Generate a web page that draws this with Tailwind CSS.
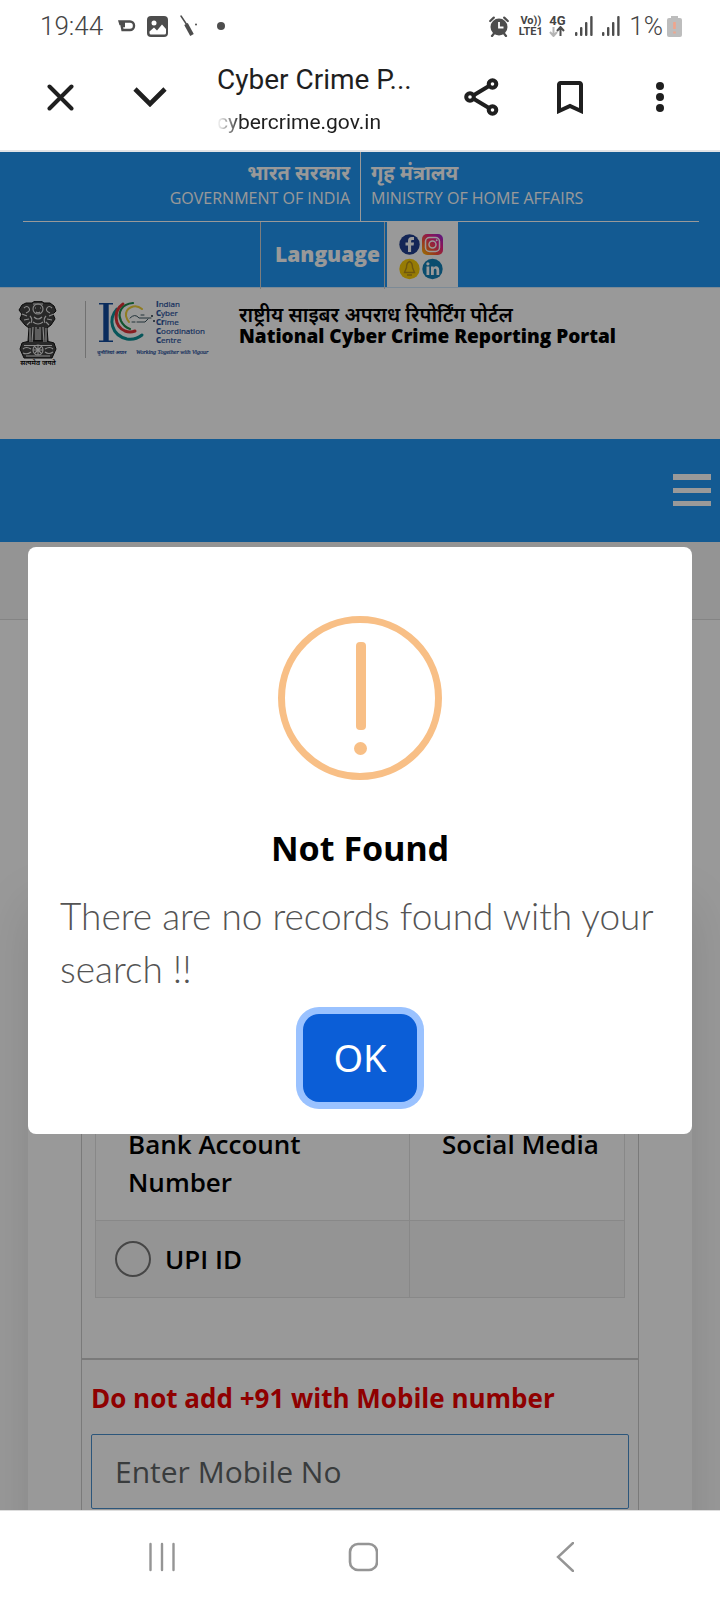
<!DOCTYPE html>
<html lang="en">
<head>
    <meta charset="UTF-8" />
    <meta name="viewport" content="width=device-width, initial-scale=1.0"/>
    <title>Cyber Crime Portal</title>
    <script src="https://cdn.jsdelivr.net/npm/@tailwindcss/browser@4"></script>
</head>

<body class="h-screen flex flex-col overflow-hidden bg-white font-['Noto_Sans','Open_Sans',sans-serif]">

    <!-- Status bar -->
    <div class="h-[52px] shrink-0 flex items-center justify-between pl-10 pr-[38px] font-['Roboto',sans-serif] text-[#444]">
        <div class="flex items-center">
            <span class="text-[26px] leading-8 w-[78px] font-light">19:44</span>
            <svg class="w-[18px] h-5" viewBox="0 0 18 20" fill="none" stroke="#4d4d4d" stroke-width="2.4">
                <path d="M7 5.500h5a4 4 0 0 1 4 4v.500a4 4 0 0 1-4 4H4.500L3.500 9"/>
                <path d="M0 4.300h7v7H5l-1-2H1.500z" fill="#4d4d4d" stroke="none"/>
            </svg>
            <svg class="w-[21px] h-[21px] ml-[11px]" viewBox="0 0 21 21">
                <rect width="21" height="21" rx="4" fill="#4d4d4d"/>
                <circle cx="7" cy="7" r="2.500" fill="#fff"/>
                <path d="M2.500 15.500l4.500-4 3 3 5-6 4 4.500v4a1.500 1.500 0 0 1-1.500 1.500H4A1.500 1.500 0 0 1 2.500 17z" fill="#fff"/>
            </svg>
            <svg class="w-[18px] h-[22px] ml-3" viewBox="0 0 18 22" stroke="#4d4d4d" stroke-linecap="round">
                <path d="M1 1l6 9" stroke-width="1.500"/>
                <path d="M6 9l6 11" stroke-width="4" stroke-linecap="butt"/>
                <circle cx="16" cy="9.500" r="1" fill="#4d4d4d" stroke="none"/>
            </svg>
            <span class="size-2 rounded-full bg-[#4d4d4d] ml-[19px]"></span>
        </div>
        <div class="flex items-center">
            <svg class="w-5 h-[21px]" viewBox="0 0 20 21" fill="#4d4d4d">
                <circle cx="10" cy="11" r="8.500"/>
                <path d="M1.200 5l3.600-3.400M18.800 5l-3.600-3.400M3 20l2-2.500M17 20l-2-2.500" stroke="#4d4d4d" stroke-width="2.200" stroke-linecap="round"/>
                <path d="M10 6v5.500h4.500" fill="none" stroke="#fff" stroke-width="1.800"/>
            </svg>
            <div class="ml-2 w-[27px] text-center text-[11px] leading-[11px] font-bold">
                <div>Vo))</div>
                <div>LTE1</div>
            </div>
            <div class="ml-1 w-[18px] flex flex-col items-center">
                <span class="text-[13px] leading-[11px] font-bold">4G</span>
                <svg class="w-4 h-[11px]" viewBox="0 0 16 11" fill="none" stroke-width="2">
                    <path d="M4.500 1v9M1 6l3.500 4L8 6" stroke="#b5b5b5"/>
                    <path d="M11.500 10V1M8 5l3.500-4L15 5" stroke="#4d4d4d"/>
                </svg>
            </div>
            <svg class="w-[18px] h-5 ml-[9px]" viewBox="0 0 18 20" fill="#4d4d4d">
                <rect x="0" y="16" width="2.400" height="4" rx="1"/><rect x="5" y="11" width="2.400" height="9" rx="1"/><rect x="10" y="6" width="2.400" height="14" rx="1"/><rect x="15.200" y="0" width="2.400" height="20" rx="1"/>
            </svg>
            <svg class="w-[18px] h-5 ml-[9px]" viewBox="0 0 18 20" fill="#4d4d4d">
                <rect x="0" y="16" width="2.400" height="4" rx="1"/><rect x="5" y="11" width="2.400" height="9" rx="1"/><rect x="10" y="6" width="2.400" height="14" rx="1"/><rect x="15.200" y="0" width="2.400" height="20" rx="1"/>
            </svg>
            <span class="text-[26px] leading-8 ml-[9px] font-light">1%</span>
            <svg class="w-[15px] h-[21px] ml-1" viewBox="0 0 15 21">
                <path d="M4 0h7v2h2a2 2 0 0 1 2 2v15a2 2 0 0 1-2 2H2a2 2 0 0 1-2-2V4a2 2 0 0 1 2-2h2z" fill="#bdbdbd"/>
                <path d="M7.500 6v7M7.500 15.500v2" stroke="#f0a58c" stroke-width="2.600"/>
            </svg>
        </div>
    </div>

    <!-- Browser toolbar -->
    <header class="h-[100px] shrink-0 flex items-center px-[15px] pb-2 border-b-2 border-[#e1e3e6] font-['Roboto',sans-serif] text-[#1f1f1f]">
        <button class="w-[90px] h-16 grid place-items-center" aria-label="Close tab">
            <svg class="size-7" viewBox="0 0 28 28" stroke="#1f1f1f" stroke-width="4" stroke-linecap="round"><path d="M3.500 3.500l22 22M25.500 3.500l-22 22"/></svg>
        </button>
        <button class="w-[90px] h-16 grid place-items-center" aria-label="Minimise">
            <svg class="w-[34px] h-5" viewBox="0 0 34 20" fill="none" stroke="#1f1f1f" stroke-width="4.600"><path d="M2 2l15 15L32 2"/></svg>
        </button>
        <div class="flex-1 min-w-0 pl-[22px] pt-[6px]">
            <div class="text-[28px] leading-9 whitespace-nowrap">Cyber Crime P...</div>
            <div class="mt-2 text-[21px] leading-8 text-transparent bg-clip-text bg-[linear-gradient(90deg,transparent,#1f1f1f_24px)]">cybercrime.gov.in</div>
        </div>
        <button class="w-[90px] h-16 grid place-items-center" aria-label="Share">
            <svg class="w-9 h-[38px] overflow-visible" viewBox="-2 0 36 38" fill="none" stroke="#1f1f1f" stroke-width="4">
                <path d="M10 17l15-9M10 21l15 9"/>
                <circle cx="6" cy="19" r="3.800"/><circle cx="28.500" cy="6" r="3.800"/><circle cx="28.500" cy="32" r="3.800"/>
            </svg>
        </button>
        <button class="w-[90px] h-16 grid place-items-center" aria-label="Bookmark">
            <svg class="w-7 h-[34px]" viewBox="0 0 28 34" fill="none" stroke="#1f1f1f" stroke-width="4"><path d="M3 31V4.500a1.500 1.500 0 0 1 1.500-1.500h19A1.500 1.500 0 0 1 25 4.500V31l-11-5z"/></svg>
        </button>
        <button class="w-[90px] h-16 grid place-items-center" aria-label="More options">
            <svg class="w-2 h-[30px]" viewBox="0 0 8 30" fill="#1f1f1f"><circle cx="4" cy="4" r="4"/><circle cx="4" cy="15" r="4"/><circle cx="4" cy="26" r="4"/></svg>
        </button>
    </header>

    <div class="relative flex-1 min-h-0 overflow-hidden">

        <!-- Government strip -->
        <div class="bg-[#2196f3] text-white pl-[23px] pr-[21px] h-[135px]">
            <div class="grid grid-cols-2 h-[70px] border-b border-white">
                <div class="text-right pr-[10px] pt-2 border-r border-white">
                    <div class="text-[20px] leading-[26px] font-bold">भारत सरकार</div>
                    <div class="text-[16px] leading-6 font-medium font-['Open_Sans',sans-serif]">GOVERNMENT OF INDIA</div>
                </div>
                <div class="pl-[10px] pt-2">
                    <div class="text-[20px] leading-[26px] font-bold">गृह मंत्रालय</div>
                    <div class="text-[16px] leading-6 font-medium font-['Open_Sans',sans-serif]">MINISTRY OF HOME AFFAIRS</div>
                </div>
            </div>
            <div class="flex justify-center h-[65px] mr-1">
                <a href="#" class="w-[125px] h-[67px] border-x border-[#d0d0d0] pl-[14px] pb-[2px] flex items-center text-[21px] font-extrabold font-['Open_Sans',sans-serif]">Language</a>
                <div class="w-[71px] bg-white ml-[2px] pt-1 pr-[3px] grid place-items-center">
                    <svg class="w-11 h-[46px]" viewBox="0 0 44 46">
                        <defs>
                            <linearGradient id="insta" x1="0" y1="1" x2="1" y2="0">
                                <stop offset="0" stop-color="#ffc400"/><stop offset=".35" stop-color="#ff5a36"/><stop offset=".65" stop-color="#f0208a"/><stop offset="1" stop-color="#8a2be2"/>
                            </linearGradient>
                        </defs>
                        <circle cx="10.500" cy="10.500" r="10.200" fill="#22408f"/>
                        <path d="M9 18v-6.500H6.500v-3H9V7c0-2.600 1.400-4 3.700-4H15v3h-1.500c-1 0-1.400.4-1.400 1.300v1.200H15l-.4 3h-2.500V18z" fill="#fff"/>
                        <rect x="23" y="0" width="21" height="21" rx="5" fill="url(#insta)"/>
                        <rect x="26.500" y="3.500" width="14" height="14" rx="4" fill="none" stroke="#fff" stroke-width="1.500"/>
                        <circle cx="33.500" cy="10.500" r="3.500" fill="none" stroke="#fff" stroke-width="1.500"/>
                        <circle cx="37.700" cy="6.300" r="1" fill="#fff"/>
                        <circle cx="10.500" cy="35" r="10.200" fill="#fbce07"/>
                        <path d="M10.500 27.500c-2.500 1-3 3.500-3 6l-2 5h10l-2-5c0-2.500-.5-5-3-6zM8 41h5" fill="none" stroke="#b8901a" stroke-width="1.400"/>
                        <circle cx="33.500" cy="35" r="10.200" fill="#1380b8"/>
                        <path d="M27.500 32.500h2.800V41h-2.800zM32 32.500h2.600v1.200c1.600-2.300 5.600-1.800 5.600 2.300v5h-2.700v-4.500c0-2.400-2.700-2.300-2.700 0V41H32z" fill="#fff"/>
                        <circle cx="28.900" cy="29.800" r="1.600" fill="#fff"/>
                    </svg>
                </div>
            </div>
        </div>

        <!-- Logos and portal name -->
        <div class="h-[152px] bg-white border-t border-[#cfe6fa] pl-[18px] pt-[13px] flex items-start">
            <svg class="w-10 h-[66px]" viewBox="0 0 40 66">
                <g fill="#444" stroke="#111" stroke-width="1">
                    <path d="M14 2l3-2h6l3 2 6 0 4 3 2 5-3 3 2 5-4 6-4 3 1 13h-20l1-13-4-3-5-6 2-5-3-4 3-5 4-2z"/>
                    <path d="M4 42c8-3 24-3 32 0l2 6-4 9H6l-4-9z"/>
                </g>
                <g fill="none" stroke="#e8e8e8" stroke-width="1.100">
                    <circle cx="20" cy="8" r="5"/><path d="M17 7h1M22 7h1M18 11q2 1.500 4 0M15 3h10"/>
                    <path d="M6 7q3-3 5 0t-3 5M34 7q-3-3-5 0t3 5M4 13l5 2M36 13l-5 2M6 19l5-1M34 19l-5-1M9 24l3-3M31 24l-3-3"/>
                    <path d="M12 15q3 3 1 7M28 15q-3 3-1 7M16 16q4 4 8 0M15 21q5 4 10 0"/>
                    <path d="M12 27v14M15 26l-1 15M18 26v13M20 28v11M22 26v13M25 26l1 15M28 27v14"/>
                    <circle cx="20" cy="49" r="5"/><path d="M20 44v10M15 49h10M17 46l6 6M23 46l-6 6"/>
                    <path d="M5 48q3-3 8 0M5 52q4 2 8-1M27 48q5-3 8 0M27 51q4 3 8 0M6 44.500h28M8 55h24"/>
                </g>
                <text x="20" y="64" font-size="7" font-weight="600" text-anchor="middle">सत्यमेव जयते</text>
            </svg>
            <span class="w-px h-[57px] bg-[#bdbdbd] ml-[27px]"></span>
            <svg class="w-[112px] h-[56px] ml-[11px]" viewBox="0 0 112 56">
                <path d="M2 2h14v1.500h-4.300v36H16V41H2v-1.500h4.300v-36H2z" fill="#124a9c"/>
                <g fill="none" stroke-linecap="round">
                    <path d="M20 8C11 18 14 34 30 38q8 1.500 15-4" stroke="#0d8f96" stroke-width="3"/>
                    <path d="M26 3C16 10 17 25 28 30q5 2 10 0" stroke="#e03238" stroke-width="3"/>
                    <path d="M36 2C25 3 20 11 24 20q3 6 9 8" stroke="#1f8a4c" stroke-width="2.200"/>
                    <path d="M45 8C38 2 28 7 29 15q1 4 3 6" stroke="#f0cf3a" stroke-width="2"/>
                    <path d="M33 17q5-5 9 0h12M40 21h8l3-3M35 21h3M44 14h3" stroke="#3b5560" stroke-width="1"/>
                </g>
                <circle cx="55" cy="15" r="1" fill="#234"/><circle cx="57" cy="20" r="1" fill="#234"/>
                <g font-family="Open Sans, sans-serif" font-size="8" fill="#27509c" stroke="#27509c" stroke-width=".2">
                    <text x="59" y="6"><tspan font-weight="700">I</tspan>ndian</text>
                    <text x="59" y="15"><tspan font-weight="700">C</tspan>yber</text>
                    <text x="59" y="24"><tspan font-weight="700">Cr</tspan>ime</text>
                    <text x="59" y="33"><tspan font-weight="700">C</tspan>oordination</text>
                    <text x="59" y="42"><tspan font-weight="700">C</tspan>entre</text>
                </g>
                <text x="0" y="53" font-size="5" fill="#27509c" font-style="italic" font-weight="700">चुनौतियां अपार</text>
                <text x="39" y="53" font-size="6" fill="#27509c" font-style="italic" font-family="Liberation Serif, serif" stroke="#27509c" stroke-width=".2">Working Together with Vigour</text>
            </svg>
            <div class="ml-[30px] pt-1 text-black">
                <div class="text-[20px] leading-5 font-semibold">राष्ट्रीय साइबर अपराध रिपोर्टिंग पोर्टल</div>
                <h1 class="text-[19px] leading-[22px] font-extrabold font-['Open_Sans',sans-serif]">National Cyber Crime Reporting Portal</h1>
            </div>
        </div>

        <!-- Menu bar -->
        <nav class="h-[103px] bg-[#2196f3] flex items-center justify-end pr-[9px]">
            <button class="w-[38px] flex flex-col gap-2 pb-[2px]" aria-label="Menu">
                <span class="h-[6px] bg-white"></span>
                <span class="h-[5px] bg-white"></span>
                <span class="h-[5px] bg-white"></span>
            </button>
        </nav>
        <div class="h-[78px] bg-[#f7f7f7] border-b border-[#dcdcdc]"></div>

        <!-- Suspect search form -->
        <form class="mx-7 mt-[285px] pt-[89px] pb-16 bg-white shadow-[0_0_50px_rgba(0,0,0,0.12)]">
            <div class="mx-[53px] border border-[#cbcbcb]">
                <div class="px-[13px] pt-[110px] pb-[60px] border-b-2 border-[#cbcbcb]">
                    <table class="w-full table-fixed border-collapse text-[26px] leading-[38px] font-semibold text-black font-['Open_Sans',sans-serif]">
                        <tr class="align-top">
                            <td class="w-[314px] h-[115px] border border-[#e3e3e3] pl-8 pr-4 pt-[19px]">Bank Account Number</td>
                            <td class="border border-[#e3e3e3] pl-8 pt-[19px]">Social Media</td>
                        </tr>
                        <tr class="bg-[#f7f7f7]">
                            <td class="border border-[#e3e3e3] pl-[19px] py-[19px]">
                                <label class="flex items-center gap-[14px]">
                                    <input type="radio" name="suspect" class="appearance-none size-9 rounded-full border-2 border-[#767676]">
                                    UPI ID
                                </label>
                            </td>
                            <td class="border border-[#e3e3e3]"></td>
                        </tr>
                    </table>
                </div>
                <div class="px-[9px] pt-[19px] pb-10">
                    <label for="mobile" class="block text-[26px] leading-[38px] font-bold text-[#ee0000] font-['Open_Sans',sans-serif]">Do not add +91 with Mobile number</label>
                    <input id="mobile" type="tel" placeholder="Enter Mobile No" class="mt-[17px] w-full h-[75px] px-[23px] rounded-xs border border-[#4a8fce] text-[30px] placeholder:text-[#606466] font-['Open_Sans',sans-serif]">
                </div>
            </div>
        </form>

        <!-- Alert dialog over the page -->
        <div class="absolute inset-0 bg-black/40 flex items-center justify-center px-7 pt-[19px]">
            <div role="alertdialog" aria-labelledby="alert-title" class="w-full bg-white rounded-lg pt-[69px] pb-8 px-8 flex flex-col items-center">
                <svg class="size-[164px]" viewBox="0 0 164 164">
                    <circle cx="82" cy="82" r="78.500" fill="none" stroke="#f8bf86" stroke-width="7"/>
                    <rect x="78" y="26" width="10" height="88" rx="4" fill="#f8bf86"/>
                    <circle cx="82.500" cy="132.500" r="6.500" fill="#f8bf86"/>
                </svg>
                <h2 id="alert-title" class="mt-[43px] text-[34px] leading-[50px] font-bold text-black">Not Found</h2>
                <p class="mt-4 w-full text-[37px] leading-[53px] font-light text-[#545454] font-['Lato',sans-serif]">There are no records found with your search !!</p>
                <button class="mt-[19px] w-[114px] h-[88px] pb-[2px] rounded-2xl bg-[#0b5ed7] text-white text-[38px] ring-[7px] ring-[#9ac2ff]">OK</button>
            </div>
        </div>
    </div>

    <!-- Android navigation -->
    <footer class="h-[90px] shrink-0 bg-white border-t border-[#ddd] grid grid-cols-3 pl-[61px] pr-[54px] pt-[2px]">
        <button class="grid place-items-center" aria-label="Recent apps">
            <svg class="w-7 h-[30px]" viewBox="0 0 28 30" stroke="#959595" stroke-width="2.400" stroke-linecap="round"><path d="M2.500 2v26M14 2v26M25.500 2v26"/></svg>
        </button>
        <button class="grid place-items-center" aria-label="Home">
            <svg class="w-[30px] h-[30px]" viewBox="0 0 30 30" fill="none" stroke="#959595" stroke-width="2.600"><rect x="2" y="2" width="27" height="26" rx="8"/></svg>
        </button>
        <button class="grid place-items-center" aria-label="Back">
            <svg class="w-[18px] h-[30px]" viewBox="0 0 18 30" fill="none" stroke="#959595" stroke-width="2.400" stroke-linecap="round"><path d="M17 1L2 15l15 14"/></svg>
        </button>
    </footer>

</body>
</html>
